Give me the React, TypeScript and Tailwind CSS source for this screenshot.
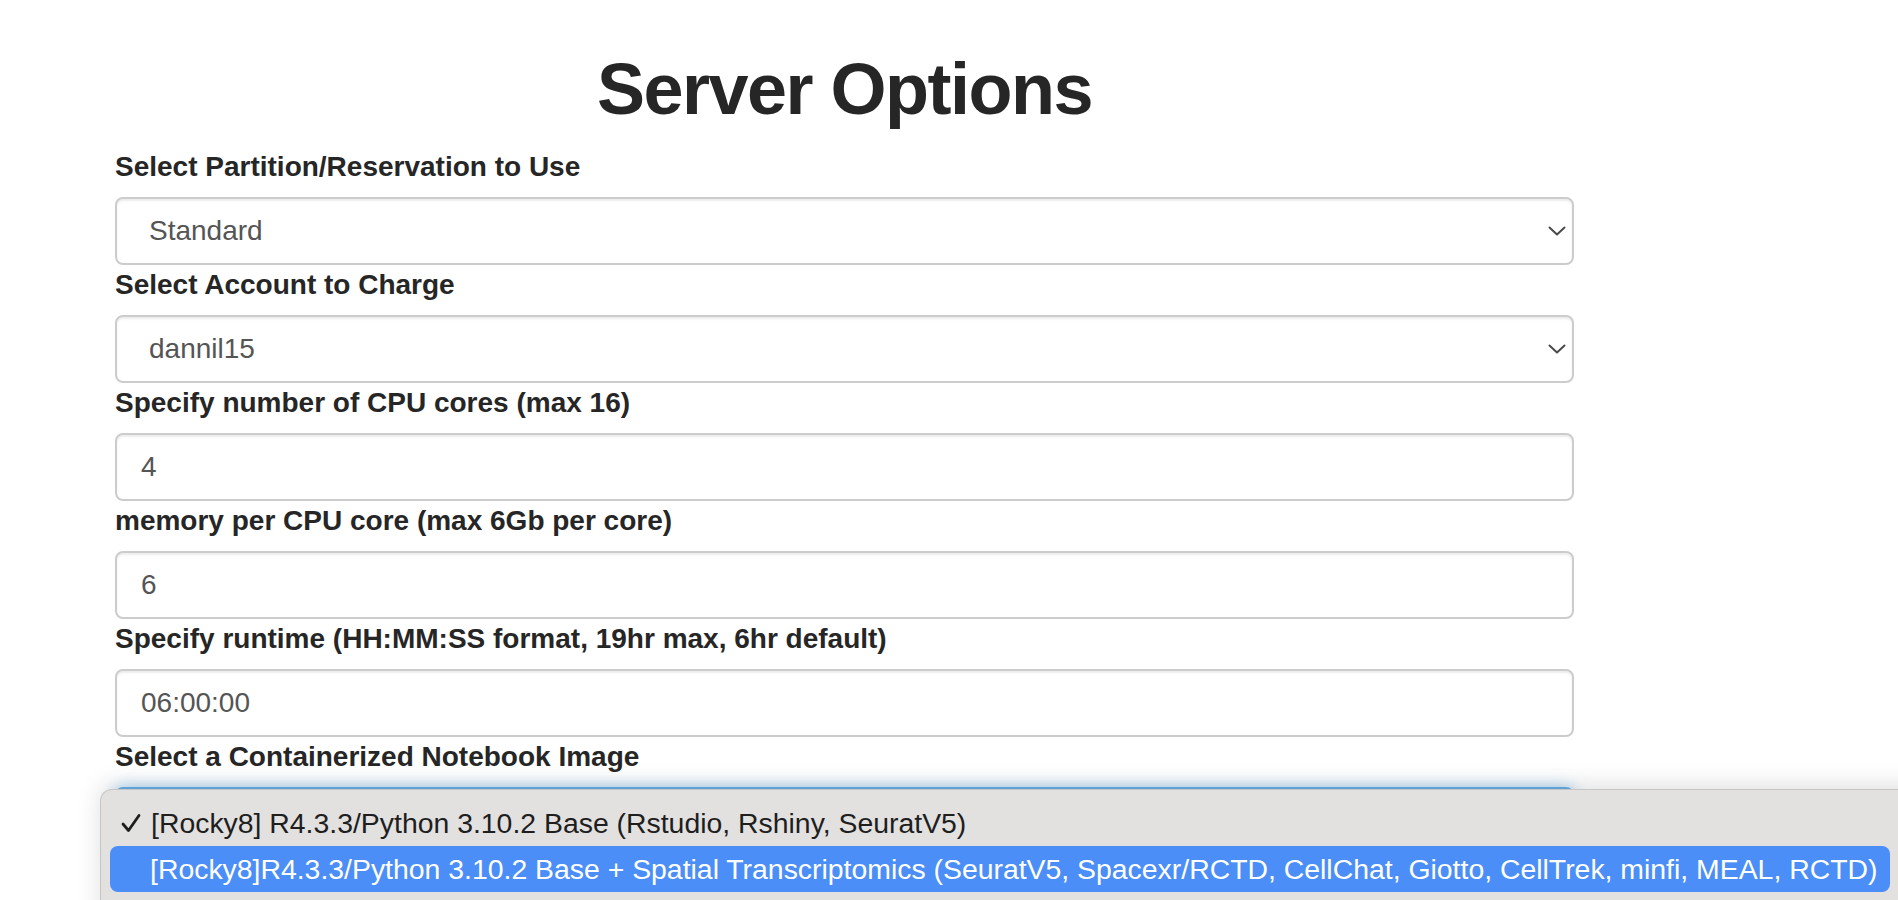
import React from 'react';

const fields = [
    { label: 'Select Partition/Reservation to Use', value: 'Standard', select: true },
    { label: 'Select Account to Charge', value: 'dannil15', select: true },
    { label: 'Specify number of CPU cores (max 16)', value: '4', select: false },
    { label: 'memory per CPU core (max 6Gb per core)', value: '6', select: false },
    { label: 'Specify runtime (HH:MM:SS format, 19hr max, 6hr default)', value: '06:00:00', select: false },
];

function Chevron() {
    return (
        <svg width="18" height="10" viewBox="0 0 18 10" fill="none">
            <path d="M1.5 1.5 L9 8.5 L16.5 1.5" stroke="#4a4a4a" strokeWidth="2" strokeLinecap="round" strokeLinejoin="round" />
        </svg>
    );
}

function Field({ label, value, select }: { label: string; value: string; select: boolean }) {
    return (
        <div>
            <label className="block text-[28px] leading-[40px] font-bold text-[#262626] mb-[10px]">{label}</label>
            <div
                className={`h-[68px] border-2 border-[#cccccc] rounded-[8px] bg-white flex items-center justify-between text-[28px] text-[#555555] shadow-[inset_0_2px_2px_rgba(0,0,0,0.075)] ${select ? 'pl-[32px] pr-[6px]' : 'pl-[24px]'}`}
            >
                <span>{value}</span>
                {select && <Chevron />}
            </div>
        </div>
    );
}

export default function App() {
    return (
        <div className="relative min-h-screen h-[900px] overflow-hidden bg-white font-['Liberation_Sans',Arial,sans-serif]">
            <div className="w-[1459px] ml-[115px] pt-[50px]">
                <h1 className="text-center text-[72px] leading-[79px] font-bold tracking-[-1.5px] text-[#262626] mb-[18px]">
                    Server Options
                </h1>

                {fields.map((f) => (
                    <Field key={f.label} {...f} />
                ))}

                {/* notebook image select, focused */}
                <div>
                    <label className="block text-[28px] leading-[40px] font-bold text-[#262626] mb-[10px]">
                        Select a Containerized Notebook Image
                    </label>
                    <div className="h-[68px] border-2 border-[#66afe9] rounded-[8px] bg-white shadow-[0_0_16px_rgba(102,175,233,0.6)]"></div>
                </div>
            </div>

            {/* native select popup */}
            <div className="absolute top-[789px] left-[100px] right-[-40px] h-[200px] bg-[#e2e1e0] border-t border-l border-[#c6c6c6] rounded-tl-[12px] shadow-[0_-4px_24px_rgba(0,0,0,0.12)] pt-[10px] text-[28.4px]">
                <div className="relative h-[46px] flex items-center pl-[50px] text-[#1e1e1e]">
                    <svg className="absolute left-[20px] top-[13px]" width="20" height="20" viewBox="0 0 20 20" fill="none">
                        <path d="M2 11 L7.5 17.5 L18 2.5" stroke="#1e1e1e" strokeWidth="2.8" strokeLinecap="round" strokeLinejoin="round" />
                    </svg>
                    [Rocky8] R4.3.3/Python 3.10.2 Base (Rstudio, Rshiny, SeuratV5)
                </div>
                <div className="ml-[9px] mr-[48px] h-[46px] rounded-[8px] bg-[#4b8ef8] flex items-center pl-[40px] text-white whitespace-nowrap">
                    [Rocky8]R4.3.3/Python 3.10.2 Base + Spatial Transcriptomics (SeuratV5, Spacexr/RCTD, CellChat, Giotto, CellTrek, minfi, MEAL, RCTD)
                </div>
            </div>
        </div>
    );
}
